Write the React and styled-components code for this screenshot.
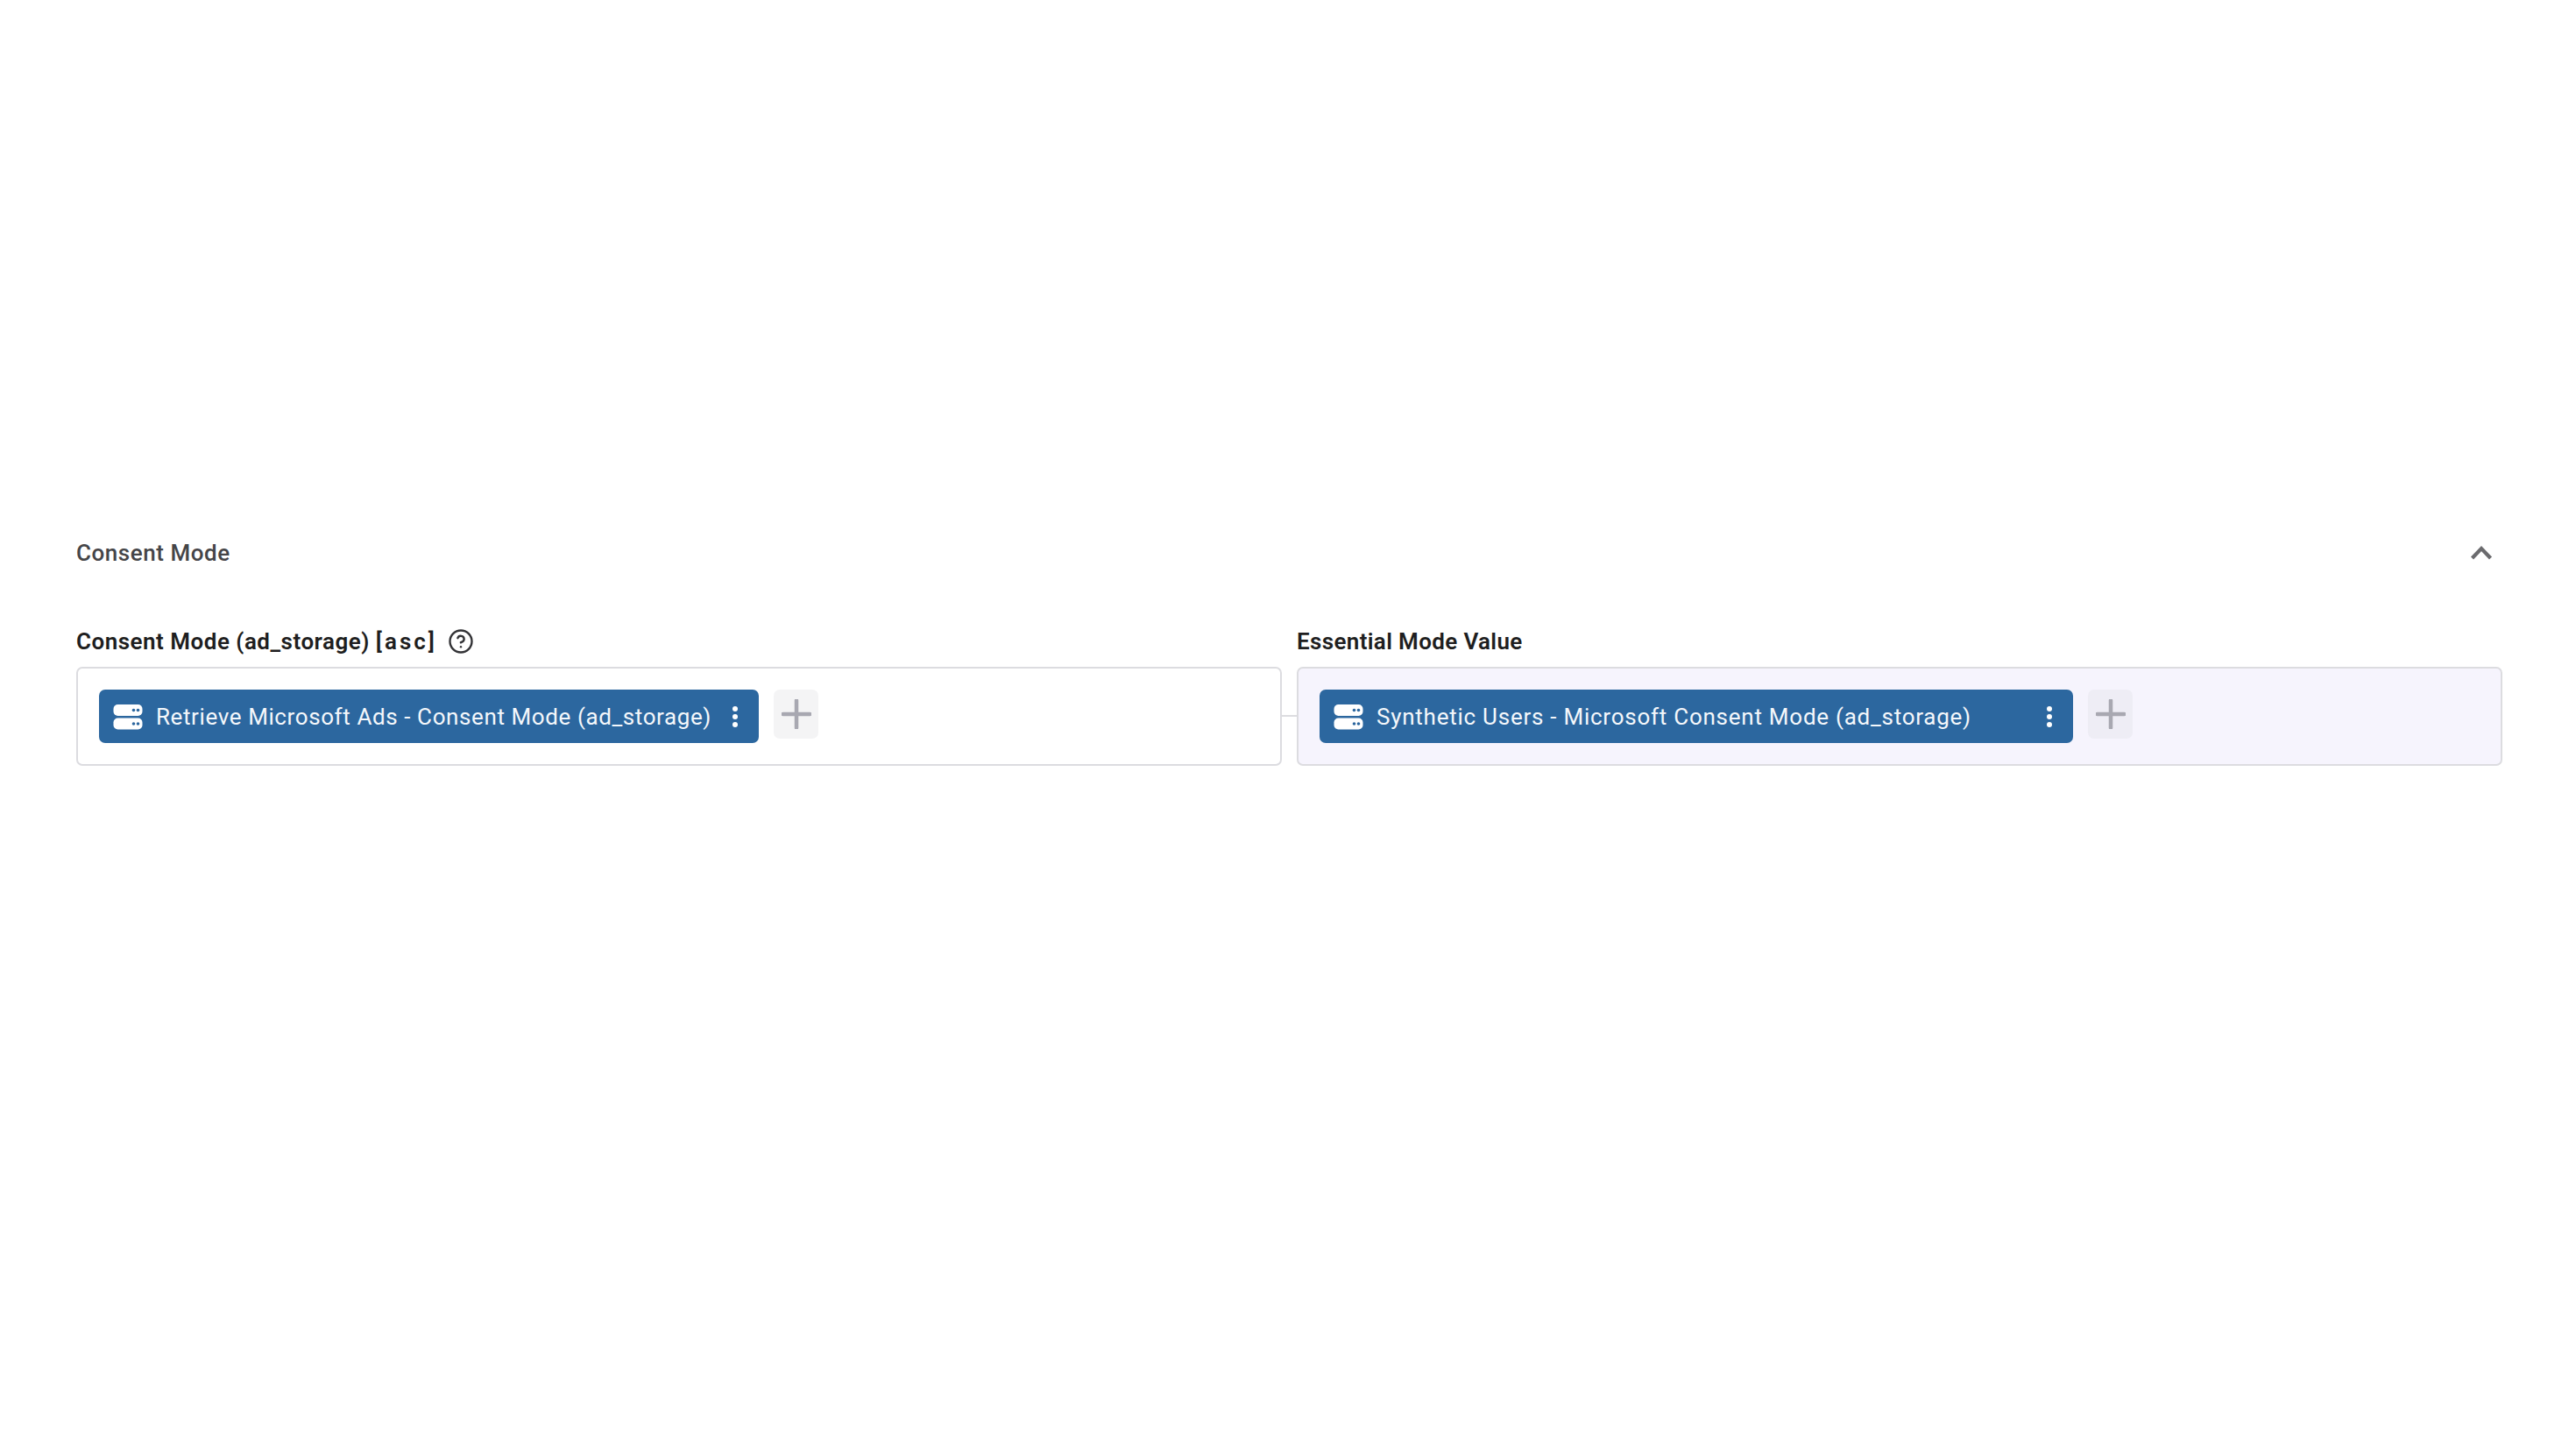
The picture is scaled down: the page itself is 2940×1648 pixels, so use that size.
import React from "react"
import styled, {createGlobalStyle} from "styled-components"
import {CircleHelp} from "lucide-react"

const GlobalStyle = createGlobalStyle`
  html, body {
    margin: 0;
    background: #fff;
    font-family: Roboto, "Liberation Sans", sans-serif;
  }
`

const ServerIcon = () => (
    <svg width="34" height="30" viewBox="0 0 34 30">
        <rect x="0.5" y="1" width="33" height="13" rx="5" fill="#fff"/>
        <rect x="0.5" y="16.5" width="33" height="13" rx="5" fill="#fff"/>
        <circle cx="23.5" cy="7.5" r="1.8" fill="#2c679f"/>
        <circle cx="28.5" cy="7.5" r="1.8" fill="#2c679f"/>
        <circle cx="23.5" cy="23" r="1.8" fill="#2c679f"/>
        <circle cx="28.5" cy="23" r="1.8" fill="#2c679f"/>
    </svg>
)

const KebabIcon = () => (
    <svg width="8" height="26" viewBox="0 0 8 26">
        <circle cx="4" cy="4" r="3" fill="#fff"/>
        <circle cx="4" cy="13" r="3" fill="#fff"/>
        <circle cx="4" cy="22" r="3" fill="#fff"/>
    </svg>
)

const PlusIcon = () => (
    <svg width="34" height="34" viewBox="0 0 34 34">
        <path d="M17 1.5v31M1.5 17h31" stroke="#a8a8b1" strokeWidth="4.5" strokeLinecap="round"/>
    </svg>
)

const ChevronIcon = () => (
    <svg width="26" height="18" viewBox="0 0 26 18">
        <path d="M2.5 15L13 4l10.5 11" fill="none" stroke="#6b6b6e" strokeWidth="4.2"/>
    </svg>
)

const Field = ({label, labelSpacing, sort, help, muted, chipWidth, spacing, text}) => (
    <Column>
        <Label $spacing={labelSpacing}>
            <span>{label}{sort && <> <Sort>{sort}</Sort></>}</span>
            {help && <Help><CircleHelp size={30} strokeWidth={1.9}/></Help>}
        </Label>
        <Box $muted={muted}>
            <Chip $width={chipWidth}>
                <ServerIcon/>
                <ChipText $spacing={spacing}>{text}</ChipText>
                <Kebab><KebabIcon/></Kebab>
            </Chip>
            <AddButton $muted={muted}><PlusIcon/></AddButton>
        </Box>
    </Column>
)

const App = () => (
    <Page>
        <GlobalStyle/>
        <Header>
            <Title>Consent Mode</Title>
            <ChevronIcon/>
        </Header>
        <Fields>
            <Field
                label="Consent Mode (ad_storage)"
                labelSpacing={0.5}
                sort="[asc]"
                help
                chipWidth={753}
                spacing={0.6}
                text="Retrieve Microsoft Ads - Consent Mode (ad_storage)"
            />
            <Field
                label="Essential Mode Value"
                labelSpacing={0.35}
                muted
                chipWidth={860}
                spacing={0.75}
                text="Synthetic Users - Microsoft Consent Mode (ad_storage)"
            />
        </Fields>
    </Page>
)

const Page = styled.div`
  box-sizing: border-box;
  width: 2940px;
  height: 1648px;
  padding: 610px 84px 0 87px;
`
const Header = styled.div`
  display: flex;
  align-items: center;
  justify-content: space-between;
  height: 42px;
  padding-right: 11px;
`
const Title = styled.div`
  font-size: 26px;
  font-weight: 500;
  color: #454548;
  letter-spacing: 0.55px;
`
const Fields = styled.div`
  display: grid;
  grid-template-columns: 1fr 1fr;
  column-gap: 17px;
  margin-top: 60px;
`
const Column = styled.div`
  display: flex;
  flex-direction: column;
  gap: 9px;
`
const Label = styled.div`
  display: flex;
  align-items: center;
  gap: 12px;
  height: 40px;
  font-size: 26px;
  font-weight: 600;
  letter-spacing: ${p => p.$spacing}px;
  color: #1e1e20;
`
const Sort = styled.span`
  letter-spacing: 3px;
`
const Help = styled.span`
  display: flex;
  color: #333336;
`
const Box = styled.div`
  position: relative;
  box-sizing: border-box;
  display: flex;
  gap: 17px;
  height: 113px;
  padding: 24px;
  background: ${p => p.$muted ? "#f6f4fd" : "#fff"};
  border: 2px solid #dcdce0;
  border-radius: 7px;
  ${p => p.$muted && `
    &::before {
      content: "";
      position: absolute;
      left: -19px;
      top: 53px;
      width: 17px;
      height: 2px;
      background: #dcdce0;
    }
  `}
`
const Chip = styled.div`
  box-sizing: border-box;
  display: flex;
  align-items: center;
  gap: 15px;
  width: ${p => p.$width}px;
  height: 61px;
  padding: 0 23px 0 16px;
  background: #2c679f;
  border-radius: 7px;
`
const ChipText = styled.span`
  flex: 1;
  font-size: 26px;
  letter-spacing: ${p => p.$spacing}px;
  color: #f4f7fb;
  white-space: nowrap;
`
const Kebab = styled.span`
  display: flex;
`
const AddButton = styled.div`
  display: flex;
  align-items: center;
  justify-content: center;
  width: 51px;
  height: 56px;
  background: ${p => p.$muted ? "#eeedf5" : "#f4f4f5"};
  border-radius: 7px;
`

export default App
